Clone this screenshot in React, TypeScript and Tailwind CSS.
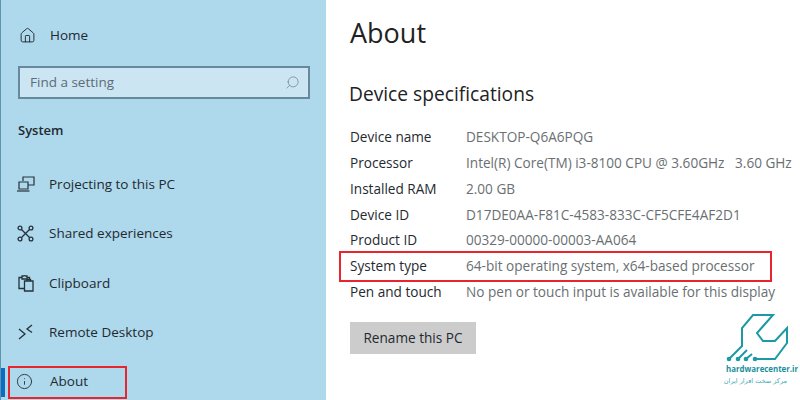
import React from 'react';
import { Home, Search, Info } from 'lucide-react';

const ProjectIcon = () => (
  <svg width="18" height="16" viewBox="0 0 18 16" fill="none" stroke="#26323a" strokeWidth="1.2">
    <path d="M6 5V1h11v8h-6" />
    <path d="M2 6h9v7H2z" />
    <path d="M0 15h12.500" />
  </svg>
);

const ShareIcon = () => (
  <svg width="17" height="17" viewBox="0 0 17 17" fill="none" stroke="#26323a" strokeWidth="1.3">
    <circle cx="3" cy="3" r="1.9" />
    <circle cx="14" cy="3" r="1.9" />
    <circle cx="3" cy="14" r="1.9" />
    <circle cx="14" cy="14" r="1.9" />
    <path d="M4.500 4.500l8 8M12.500 4.500l-8 8" />
  </svg>
);

const ClipboardIcon = () => (
  <svg width="16" height="18" viewBox="0 0 16 18" fill="none" stroke="#26323a" strokeWidth="1.3">
    <path d="M6 14.500H1V3.500h3M9 3.500h2.500v3" />
    <path d="M4 5V2h1.500a2 2 0 0 1 2 0H9v3z" />
    <path d="M6.500 7h8.500v10H6.500z" />
    <path d="M9 7V5.500h3.500V7" />
  </svg>
);

const RemoteIcon = () => (
  <svg width="15" height="16" viewBox="0 0 15 16" fill="none" stroke="#26323a" strokeWidth="1.3">
    <path d="M1 5l6 5-6 5" />
    <path d="M14 1L9 5l5 3.500" />
  </svg>
);

const Logo = () => (
  <svg width="70" height="60" viewBox="0 0 70 60" fill="none" stroke="#1a9aa5" strokeWidth="2">
    <path d="M9 54L22 41V23L33 10H53L37 28L43 36H55L67 23V38L55 54H35" />
    <path d="M18 54L27 45M26 54L32 49" />
    <circle cx="9" cy="54" r="2.300" fill="#1a9aa5" stroke="none" />
    <circle cx="18" cy="54" r="2.300" fill="#1a9aa5" stroke="none" />
    <circle cx="26" cy="54" r="2.300" fill="#1a9aa5" stroke="none" />
    <circle cx="35" cy="54" r="2.300" fill="#1a9aa5" stroke="none" />
  </svg>
);

const navItems = [
  { label: 'Projecting to this PC', icon: <ProjectIcon /> },
  { label: 'Shared experiences', icon: <ShareIcon /> },
  { label: 'Clipboard', icon: <ClipboardIcon /> },
  { label: 'Remote Desktop', icon: <RemoteIcon /> },
];

const specs = [
  ['Device name', 'DESKTOP-Q6A6PQG'],
  ['Processor', 'Intel(R) Core(TM) i3-8100 CPU @ 3.60GHz   3.60 GHz'],
  ['Installed RAM', '2.00 GB'],
  ['Device ID', 'D17DE0AA-F81C-4583-833C-CF5CFE4AF2D1'],
  ['Product ID', '00329-00000-00003-AA064'],
  ['System type', '64-bit operating system, x64-based processor'],
  ['Pen and touch', 'No pen or touch input is available for this display'],
];

export default function App() {
  return (
    <div className="flex h-[400px] w-[800px] overflow-hidden bg-white font-['Open_Sans',sans-serif] text-[#1f2a30]">
      <aside className="flex h-full w-[326px] shrink-0 flex-col overflow-hidden border-l border-l-[#5f93ab] bg-[#aed8ec] text-[13.500px]">
        <div className="mt-[23px] flex h-[24px] shrink-0 items-center pl-[18px]">
          <Home size={17} strokeWidth={1.4} color="#26323a" />
          <span className="ml-[14px]">Home</span>
        </div>
        <div className="ml-[17px] mt-[19px] flex h-[33px] w-[292px] shrink-0 items-center justify-between border-2 border-[#66899b] bg-[#cbe5f3] pl-[10px] pr-[8px] text-[#5c6c75]">
          <span>Find a setting</span>
          <Search size={15} strokeWidth={1.2} color="#6f8591" className="-scale-x-100" />
        </div>
        <div className="ml-[17px] mt-[21px] h-[20px] shrink-0 text-[13px] font-semibold leading-[20px]">System</div>
        <div className="mt-[19.500px] flex shrink-0 flex-col">
          {navItems.map(item => (
            <div key={item.label} className="flex h-[49.300px] shrink-0 items-center">
              <div className="flex w-[48px] justify-center pl-[1px]">{item.icon}</div>
              <span>{item.label}</span>
            </div>
          ))}
          <div className="relative flex h-[49px] shrink-0 items-center">
            <div className="absolute left-[-1px] top-[11px] h-[29px] w-[5px] bg-[#0a6cc4]" />
            <div className="absolute left-[7px] top-[9px] h-[33px] w-[119px] border-2 border-[#e8252c]" />
            <div className="flex w-[47px] justify-center">
              <Info size={17} strokeWidth={1.3} color="#26323a" />
            </div>
            <span className="ml-[2px]">About</span>
          </div>
        </div>
      </aside>
      <main className="relative flex-1 pl-[24px] text-[13.600px]">
        <h1 className="mt-[12px] h-[42px] text-[27px] leading-[42px] text-[#222]">About</h1>
        <h2 className="ml-[-1px] mt-[25px] h-[30px] text-[19.200px] leading-[30px] text-[#222]">Device specifications</h2>
        <div className="mt-[15.500px] flex flex-col">
          {specs.map(([name, value]) => (
            <div key={name} className="flex h-[25.800px] items-center whitespace-pre">
              <span className="w-[116px]">{name}</span>
              <span className="text-[#6a6f72]">{value}</span>
            </div>
          ))}
        </div>
        <div className="mt-[17px] flex h-[32px] w-[126px] items-center justify-center bg-[#cccccc]">Rename this PC</div>
        <div className="absolute left-[13px] top-[251px] h-[31px] w-[433px] border-2 border-[#e8252c]" />
        <div className="absolute left-[394px] top-[305px] flex w-[70px] flex-col">
          <Logo />
          <span className="ml-[6px] mt-[-2px] whitespace-nowrap text-[7.900px] font-bold leading-[12px] text-[#1a8f9b]">hardwarecenter.ir</span>
          <span dir="rtl" className="w-[67px] whitespace-nowrap font-['DejaVu_Sans',sans-serif] text-[6.500px] leading-[12px] text-[#3fa9b3]">مرکز سخت افزار ایران</span>
        </div>
      </main>
    </div>
  );
}
